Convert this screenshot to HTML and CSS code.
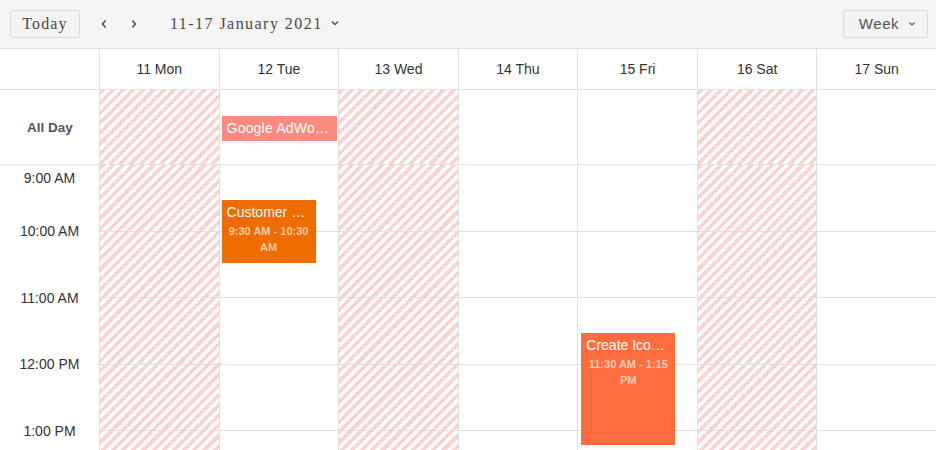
FILE: index.html
```html
<!DOCTYPE html>
<html>
<head>
<meta charset="utf-8">
<link rel="stylesheet" href="styles.css">
</head>
<body>
<div class="scheduler">
  <div class="toolbar">
    <button class="btn today">Today</button>
    <span class="nav prev"><svg width="8" height="10" viewBox="0 0 8 10"><path d="M5.5 1.5 L2.5 5 L5.5 8.5" fill="none" stroke="#555" stroke-width="1.6"/></svg></span>
    <span class="nav next"><svg width="8" height="10" viewBox="0 0 8 10"><path d="M2.5 1.5 L5.5 5 L2.5 8.5" fill="none" stroke="#555" stroke-width="1.6"/></svg></span>
    <span class="range">11-17 January 2021</span>
    <span class="caret"><svg width="8" height="6" viewBox="0 0 8 6"><path d="M1 1.5 L4 4.5 L7 1.5" fill="none" stroke="#555" stroke-width="1.5"/></svg></span>
    <span class="spacer"></span>
    <button class="btn week">Week <svg class="wcaret" width="8" height="6" viewBox="0 0 8 6"><path d="M1.5 1.5 L4 4 L6.5 1.5" fill="none" stroke="#666" stroke-width="1.2"/></svg></button>
  </div>

  <div class="row header">
    <div class="corner"></div>
    <div class="hcell">11 Mon</div>
    <div class="hcell">12 Tue</div>
    <div class="hcell">13 Wed</div>
    <div class="hcell">14 Thu</div>
    <div class="hcell">15 Fri</div>
    <div class="hcell">16 Sat</div>
    <div class="hcell">17 Sun</div>
  </div>

  <div class="row allday">
    <div class="adlabel">All Day</div>
    <div class="adcell off"></div>
    <div class="adcell"><div class="adevent">Google AdWords</div></div>
    <div class="adcell off"></div>
    <div class="adcell"></div>
    <div class="adcell"></div>
    <div class="adcell off"></div>
    <div class="adcell"></div>
  </div>

  <div class="row body">
    <div class="times">
      <div class="tlabel first">9:00 AM</div>
      <div class="tlabel">10:00 AM</div>
      <div class="tlabel">11:00 AM</div>
      <div class="tlabel">12:00 PM</div>
      <div class="tlabel">1:00 PM</div>
    </div>
    <div class="day off"><div class="slot"></div><div class="slot"></div><div class="slot"></div><div class="slot"></div><div class="slot"></div></div>
    <div class="day">
      <div class="slot"></div><div class="slot"></div><div class="slot"></div><div class="slot"></div><div class="slot"></div>
      <div class="event customer" style="top:35px;height:63px">
        <div class="etitle">Customer Meeting</div>
        <div class="etime">9:30 AM - 10:30 AM</div>
      </div>
    </div>
    <div class="day off"><div class="slot"></div><div class="slot"></div><div class="slot"></div><div class="slot"></div><div class="slot"></div></div>
    <div class="day"><div class="slot"></div><div class="slot"></div><div class="slot"></div><div class="slot"></div><div class="slot"></div></div>
    <div class="day">
      <div class="slot"></div><div class="slot"></div><div class="slot"></div><div class="slot"></div><div class="slot"></div>
      <div class="event create" style="top:168px;height:112px">
        <div class="etitle">Create Icons for website</div>
        <div class="etime">11:30 AM - 1:15 PM</div>
      </div>
    </div>
    <div class="day off"><div class="slot"></div><div class="slot"></div><div class="slot"></div><div class="slot"></div><div class="slot"></div></div>
    <div class="day"><div class="slot"></div><div class="slot"></div><div class="slot"></div><div class="slot"></div><div class="slot"></div></div>
  </div>
</div>
</body>
</html>
```
FILE: styles.css
```css
* { box-sizing: border-box; }
html, body { margin: 0; padding: 0; background: #fff; }
body { width: 936px; height: 450px; overflow: hidden; font-family: "Liberation Sans", Arial, sans-serif; color: #333; }

.scheduler { width: 936px; height: 450px; overflow: hidden; }

.toolbar {
  height: 49px;
  background: #f5f5f5;
  border-bottom: 1px solid #e0e0e0;
  display: flex;
  align-items: center;
  padding: 0 8px 1px 10px;
}
.btn {
  height: 28px;
  border: 1px solid #dcdcdc;
  border-radius: 2px;
  background: #f4f4f4;
  color: #444;
  padding: 0;
  display: flex;
  align-items: center;
  justify-content: center;
}
.today {
  width: 70px;
  font-family: "Liberation Serif", "Times New Roman", serif;
  font-size: 16px;
  letter-spacing: 1.1px;
  color: #4a4a4a;
}
.nav { display: flex; align-items: center; width: 8px; height: 10px; }
.prev { margin-left: 20px; }
.next { margin-left: 22px; }
.range {
  margin-left: 32px;
  font-family: "Liberation Serif", "Times New Roman", serif;
  font-size: 16px;
  letter-spacing: 1.45px;
  color: #4a4a4a;
}
.caret { display: flex; margin-left: 8px; margin-top: -2px; }
.spacer { flex: 1; }
.week {
  width: 85px;
  font-size: 15px;
  letter-spacing: 0.6px;
  color: #555;
  gap: 9px;
  padding-left: 4px;
}
.wcaret { margin-top: 1px; }

.row { display: grid; grid-template-columns: 99px repeat(7, minmax(0, 1fr)); }

.header { height: 41px; border-bottom: 1px solid #e0e0e0; }
.hcell {
  border-left: 1px solid #e0e0e0;
  display: flex;
  align-items: center;
  justify-content: center;
  font-size: 14px;
  color: #333;
}

.allday { height: 75px; border-bottom: 1px solid #e0e0e0; }
.adlabel {
  display: flex;
  align-items: center;
  justify-content: center;
  font-size: 13.5px;
  font-weight: bold;
  color: #555;
  padding-left: 1px;
}
.adcell { border-left: 1px solid #e0e0e0; padding: 26px 1px 0 2px; min-width: 0; }
.off {
  background: repeating-linear-gradient(135deg, #fcd3d3 0 3.7px, #ffffff 3.7px 7.2px);
}
.adevent {
  height: 25px;
  background: #f98a80;
  color: #fff;
  font-size: 14px;
  letter-spacing: 0.2px;
  line-height: 25px;
  padding: 0 4px 0 5px;
  white-space: nowrap;
  overflow: hidden;
  text-overflow: ellipsis;
}

.body { height: 286px; }
.times {
  display: flex;
  flex-direction: column;
  align-items: center;
  gap: 46.5px;
  padding-top: 3px;
}
.tlabel { height: 20px; line-height: 20px; font-size: 14px; color: #333; }
.tlabel.first { margin-bottom: -13.5px; }

.day { position: relative; border-left: 1px solid #e0e0e0; }
.slot { height: 66.5px; border-bottom: 1px solid #e0e0e0; }

.event {
  position: absolute;
  left: 2px;
  width: 94px;
  color: #fff;
  padding: 4px 5px;
  overflow: hidden;
}
.customer { background: #ee6c00; }
.create { background: #ff6d3f; left: 3px; }
.etitle {
  font-size: 14px;
  line-height: 17px;
  white-space: nowrap;
  overflow: hidden;
  text-overflow: ellipsis;
}
.etime {
  margin-top: 2px;
  font-size: 11px;
  font-weight: bold;
  line-height: 16px;
  text-align: center;
  padding: 0 2px;
}
.customer .etime { color: #fbcc9f; }
.create .etime { color: #ffcbb6; }
```
